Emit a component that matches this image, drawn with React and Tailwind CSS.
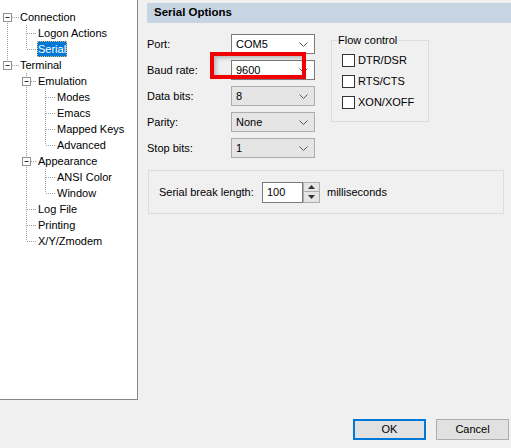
import React from "react";

const COLS = [7, 26, 45];
const WIDTHS = [19, 37, 56];

const treeRows = [
  { label: "Connection", level: 0, exp: true, cols: { 0: "below" } },
  { label: "Logon Actions", level: 1, cols: { 0: "full", 1: "full" } },
  { label: "Serial", level: 1, cols: { 0: "full", 1: "half" }, selected: true },
  { label: "Terminal", level: 0, exp: true, cols: { 0: "half" } },
  { label: "Emulation", level: 1, exp: true, cols: { 1: "full" } },
  { label: "Modes", level: 2, cols: { 1: "full", 2: "full" } },
  { label: "Emacs", level: 2, cols: { 1: "full", 2: "full" } },
  { label: "Mapped Keys", level: 2, cols: { 1: "full", 2: "full" } },
  { label: "Advanced", level: 2, cols: { 1: "full", 2: "half" } },
  { label: "Appearance", level: 1, exp: true, cols: { 1: "full" } },
  { label: "ANSI Color", level: 2, cols: { 1: "full", 2: "full" } },
  { label: "Window", level: 2, cols: { 1: "full", 2: "half" } },
  { label: "Log File", level: 1, cols: { 1: "full" } },
  { label: "Printing", level: 1, cols: { 1: "full" } },
  { label: "X/Y/Zmodem", level: 1, cols: { 1: "half" } },
];

function TreeGlyph({ level, exp, cols }) {
  const w = WIDTHS[level];
  const cx = COLS[level];
  const dot = { stroke: "#a0a0a0", strokeWidth: 1, strokeDasharray: "1 1" };
  return (
    <svg width={w} height="16" className="shrink-0">
      {Object.entries(cols).map(([c, kind]) => {
        const x = COLS[c] + 0.5;
        const y1 = kind === "below" ? 8 : 0;
        const y2 = kind === "half" ? 8 : 16;
        return <line key={c} x1={x} y1={y1} x2={x} y2={y2} {...dot} />;
      })}
      <line x1={exp ? cx + 5 : cx + 1} y1="8.5" x2={w} y2="8.5" {...dot} />
      {exp && (
        <g>
          <rect x={cx - 3.5} y="4.5" width="8" height="8" fill="#ffffff" stroke="#919191" />
          <line x1={cx - 1.5} y1="8.5" x2={cx + 2.5} y2="8.5" stroke="#333333" />
        </g>
      )}
    </svg>
  );
}

function Chevron() {
  return (
    <svg width="9" height="5" className="shrink-0">
      <polyline points="0.5,0.5 4.5,4.5 8.5,0.5" fill="none" stroke="#5a5a5a" strokeWidth="1" />
    </svg>
  );
}

function Combo({ value, editable }) {
  return (
    <div
      className={`w-[84px] h-[20px] flex items-center justify-between pl-[4px] pr-[6px] border ${
        editable ? "bg-white border-[#7a7a7a]" : "bg-[#e5e5e5] border-[#adadad]"
      }`}
    >
      <span>{value}</span>
      <Chevron />
    </div>
  );
}

function Checkbox({ label }) {
  return (
    <div className="flex items-center h-[21px]">
      <div className="w-[13px] h-[13px] border border-[#333333] bg-white" />
      <span className="ml-[3px]">{label}</span>
    </div>
  );
}

export default function App() {
  const fields = [
    { label: "Port:", value: "COM5", editable: true },
    { label: "Baud rate:", value: "9600", editable: true },
    { label: "Data bits:", value: "8" },
    { label: "Parity:", value: "None" },
    { label: "Stop bits:", value: "1" },
  ];

  return (
    <div className="w-[511px] h-[448px] overflow-hidden bg-[#f0f0f0] flex flex-col text-[11px] text-black font-['Liberation_Sans',Arial,sans-serif]">
      <div className="flex h-[400px]">
        {/* TREE */}
        <div className="w-[138px] h-[400px] shrink-0 bg-white border-r border-b border-[#828790] pt-[9px]">
          {treeRows.map((row) => (
            <div key={row.label} className="flex items-center h-[16px]">
              <TreeGlyph level={row.level} exp={row.exp} cols={row.cols} />
              <span
                className={`h-[16px] leading-[16px] px-[1px] whitespace-nowrap ${
                  row.selected
                    ? "bg-[#0078d7] text-white outline-1 outline-dotted outline-[#e8b860] -outline-offset-1"
                    : ""
                }`}
              >
                {row.label}
              </span>
            </div>
          ))}
        </div>

        {/* PANEL */}
        <div className="ml-[9px] flex-1 pt-[3px] flex flex-col">
          <div className="h-[20px] bg-[#c7d5e3] pl-[7px] flex items-center font-bold text-[11.5px]">
            Serial Options
          </div>

          <div className="mt-[11px] flex">
            <div className="relative flex flex-col gap-[6px] w-[168px]">
              {fields.map((f) => (
                <div key={f.label} className="flex items-center h-[20px]">
                  <span className="w-[84px]">{f.label}</span>
                  <Combo value={f.value} editable={f.editable} />
                </div>
              ))}
              <div className="absolute left-[63px] top-[18px] w-[96px] h-[27px] border-[4px] border-[#f00000] shadow-[inset_2px_2px_4px_rgba(0,0,0,0.25)]" />
            </div>

            <fieldset className="ml-[16px] w-[98px] h-[88px] border border-[#dcdcdc] pt-[3px]">
              <legend className="ml-[5px] px-[1px] leading-[13px]">Flow control</legend>
              <div className="pl-[10px]">
                <Checkbox label="DTR/DSR" />
                <Checkbox label="RTS/CTS" />
                <Checkbox label="XON/XOFF" />
              </div>
            </fieldset>
          </div>

          <div className="mt-[12px] ml-[1px] w-[356px] h-[44px] border border-[#dcdcdc] flex items-center pl-[10px]">
            <span className="w-[103px]">Serial break length:</span>
            <div className="w-[41px] h-[21px] bg-white border border-[#7a7a7a] pl-[4px] flex items-center">
              100
            </div>
            <div className="w-[17px] h-[21px] flex flex-col">
              <div className="h-[10px] bg-[#e5e5e5] border border-[#adadad] flex items-center justify-center">
                <svg width="7" height="4">
                  <polygon points="0,4 3.5,0 7,4" fill="#333333" />
                </svg>
              </div>
              <div className="h-[11px] bg-[#e5e5e5] border border-t-0 border-[#adadad] flex items-center justify-center">
                <svg width="7" height="4">
                  <polygon points="0,0 3.5,4 7,0" fill="#333333" />
                </svg>
              </div>
            </div>
            <span className="ml-[7px]">milliseconds</span>
          </div>
        </div>
      </div>

      {/* BUTTONS */}
      <div className="flex justify-end gap-[10px] pt-[19px] pr-[2px]">
        <button className="w-[73px] h-[21px] border-2 border-[#0078d7] bg-[#e1e1e1] text-[11px]">
          OK
        </button>
        <button className="w-[73px] h-[21px] border border-[#adadad] bg-[#e1e1e1] text-[11px]">
          Cancel
        </button>
      </div>
    </div>
  );
}
